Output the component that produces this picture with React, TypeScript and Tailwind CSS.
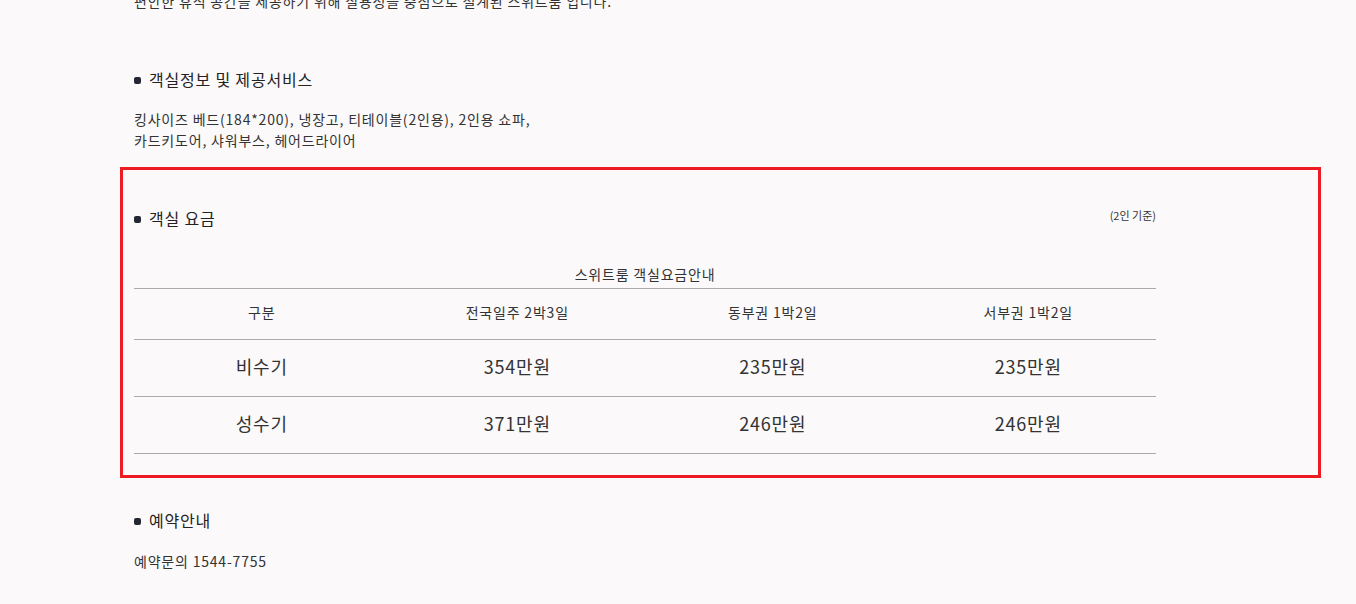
const FONT = "font-['Noto_Sans_CJK_KR','Noto_Sans',sans-serif]";

const prices = [
  { season: "비수기", values: ["354만원", "235만원", "235만원"] },
  { season: "성수기", values: ["371만원", "246만원", "246만원"] },
];

function SectionTitle({ children }: { children: React.ReactNode }) {
  return (
    <h3 className="flex h-[24px] items-center gap-2 pb-[2px] text-[16px] leading-[22px] font-normal text-[#222]">
      <span className="mt-[2px] h-[7px] w-[7px] rounded-[2px] bg-[#222733]" />
      {children}
    </h3>
  );
}

export default function App() {
  return (
    <main className={`h-[604px] overflow-hidden bg-[#fbf9fa] tracking-[0.05em] text-[#333] ${FONT}`}>
      <div className="ml-[120px] w-[1201px]">
        <div className="px-[14px]">
          <p className="-mt-[9px] h-[21px] text-[14px] leading-[21px]">
            편안한 휴식 공간을 제공하기 위해 실용성을 중심으로 설계된 스위트룸 입니다.
          </p>

          <div className="mt-[56px]">
            <SectionTitle>객실정보 및 제공서비스</SectionTitle>
          </div>

          <p className="mt-[17px] text-[14px] leading-[21px]">
            킹사이즈 베드(184*200), 냉장고, 티테이블(2인용), 2인용 쇼파,
            <br />
            카드키도어, 샤워부스, 헤어드라이어
          </p>
        </div>

        <section className="mt-[16px] border-[3px] border-[#ed1c24] px-[11px] pt-[37px] pb-[21px]">
          <div className="w-[1022px]">
            <div className="flex items-start justify-between">
              <SectionTitle>객실 요금</SectionTitle>
              <span className="text-[11px] leading-[16px] tracking-normal text-[#333]">(2인 기준)</span>
            </div>

            <table className="mt-[33px] w-full table-fixed border-collapse">
              <caption className="h-[24px] pb-[4px] text-center text-[14px] leading-[20px] text-[#333]">
                스위트룸 객실요금안내
              </caption>
              <thead>
                <tr className="h-[51px] border-y border-[#aaa]">
                  {["구분", "전국일주 2박3일", "동부권 1박2일", "서부권 1박2일"].map((h) => (
                    <th key={h} className="pb-[3px] text-center text-[14px] font-normal text-[#333]">
                      {h}
                    </th>
                  ))}
                </tr>
              </thead>
              <tbody>
                {prices.map((row) => (
                  <tr key={row.season} className="h-[57px] border-b border-[#aaa]">
                    <td className="pb-[3px] text-center text-[18px] text-[#333]">{row.season}</td>
                    {row.values.map((v, i) => (
                      <td key={i} className="pb-[3px] text-center text-[18px] text-[#333]">
                        {v}
                      </td>
                    ))}
                  </tr>
                ))}
              </tbody>
            </table>
          </div>
        </section>

        <div className="px-[14px]">
          <div className="mt-[31px]">
            <SectionTitle>예약안내</SectionTitle>
          </div>
          <p className="mt-[18px] text-[14px] leading-[21px]">예약문의 1544-7755</p>
        </div>
      </div>
    </main>
  );
}
